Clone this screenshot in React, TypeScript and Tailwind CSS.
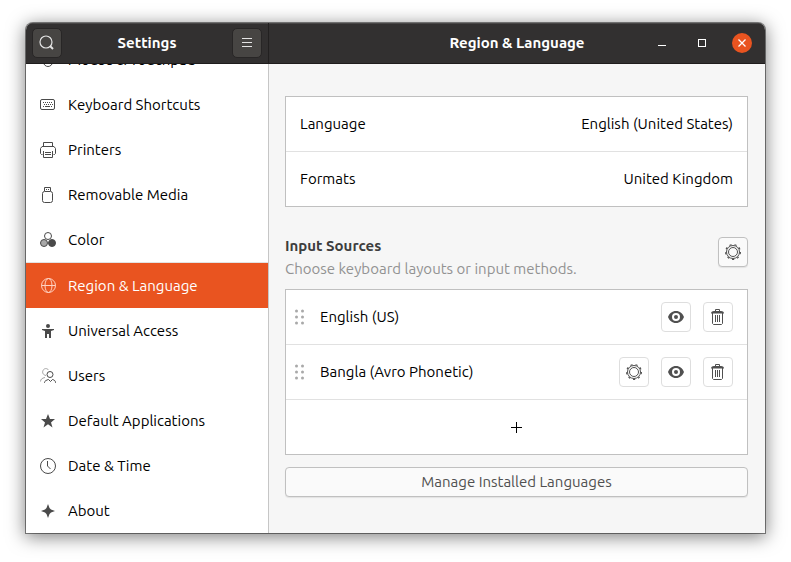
import type { ReactNode } from "react";

type IconProps = { children: ReactNode; size?: number };

function Icon({ children, size = 16 }: IconProps) {
  return (
    <svg
      width={size}
      height={size}
      viewBox={`0 0 ${size} ${size}`}
      fill="none"
      stroke="currentColor"
      className="shrink-0"
      aria-hidden="true"
    >
      {children}
    </svg>
  );
}

const MouseIcon = () => (
  <Icon>
    <rect x="3.5" y="0.5" width="9" height="14" rx="4.5" />
    <path d="M8 3v3" />
  </Icon>
);

const KeyboardIcon = () => (
  <Icon>
    <rect x="0.5" y="2.5" width="14" height="10" rx="1.5" />
    <path d="M3 5.5h10M4 7.5h9" strokeDasharray="1 1" />
    <path d="M3 9.5h1M5 9.5h5M11 9.5h1" />
  </Icon>
);

const PrinterIcon = () => (
  <Icon>
    <path d="M3.5 4.5v-4h9v4M2.5 12.5h-1l-1-1v-5l1.5-2h12l1.5 2v5l-1 1h-1" />
    <path d="M3.5 9v6.5h9V9M5 10.5h6M5 12.5h6" />
  </Icon>
);

const MediaIcon = () => (
  <Icon>
    <path d="M4.5 4V0.5h6V4M6 2.5h1M8 2.5h1" />
    <rect x="2.5" y="4.5" width="10" height="11" rx="2" />
  </Icon>
);

const ColorIcon = () => (
  <Icon>
    <circle cx="8" cy="4" r="3.5" />
    <circle cx="4" cy="11" r="3.5" fill="#a8a8a8" />
    <circle cx="12" cy="11" r="3.5" fill="currentColor" />
  </Icon>
);

const GlobeIcon = () => (
  <Icon>
    <circle cx="8.5" cy="7.5" r="7" />
    <ellipse cx="8.5" cy="7.5" rx="3.5" ry="7" />
    <path d="M1.5 7.5h14" />
  </Icon>
);

const AccessIcon = () => (
  <Icon>
    <g fill="currentColor" stroke="none">
      <circle cx="8" cy="3" r="2" />
      <path d="M2 6h12v1l-3 1v7H9v-4H7v4H5V8L2 7z" />
    </g>
  </Icon>
);

const UsersIcon = () => (
  <Icon>
    <g stroke="#a3a3a3">
      <path d="M6 7.5C3 7 2 4.500 3 2.5c1-2.300 4-2.600 5.500-.5" />
      <path d="M.5 13.5c0-2 1.500-3.500 4.500-4" />
    </g>
    <circle cx="10" cy="6.5" r="3" />
    <path d="M4.5 15v-.5c0-1.500 2-2.500 4-3l2 2 2-2c2 .5 3 1.500 3 3v.5" />
  </Icon>
);

const StarIcon = () => (
  <Icon>
    <path
      d="M8 1l2 5h5l-4 3.400L12.5 14.5 8 11.300 3.500 14.500 5 9.400 1 6h5z"
      fill="currentColor"
      stroke="none"
    />
  </Icon>
);

const ClockIcon = () => (
  <Icon>
    <circle cx="8" cy="8" r="7.5" />
    <path d="M7.5 3v5l3 3" />
  </Icon>
);

const SparkIcon = () => (
  <Icon>
    <path
      d="M8 1l1.500 4L11 6.500 15 8l-4 1.500L9.500 11 8 15l-1.500-4L5 9.500 1 8l4-1.500L6.500 5z"
      fill="currentColor"
      stroke="none"
    />
  </Icon>
);

const GearIcon = () => (
  <Icon>
    <circle cx="8" cy="8" r="4.5" />
    <circle cx="8" cy="8" r="6.5" />
    <circle cx="8" cy="8" r="7.4" strokeWidth="1.2" strokeDasharray="2.2 2.965" />
  </Icon>
);

const EyeIcon = () => (
  <Icon>
    <path
      fillRule="evenodd"
      d="M8 2c4 0 6.600 2.400 8 6-1.400 3.600-4 6-8 6s-6.600-2.400-8-6c1.400-3.600 4-6 8-6zm0 2a4 4 0 100 8 4 4 0 000-8zm0 2a2 2 0 110 4 2 2 0 010-4z"
      fill="currentColor"
      stroke="none"
    />
  </Icon>
);

const TrashIcon = () => (
  <Icon>
    <path d="M5.500 2.500v-2h4v2" />
    <path d="M1 4.500c0-1.500 1-2.500 3-2.500h7c2 0 3 1 3 2.500z" fill="currentColor" stroke="none" />
    <path d="M2.500 4v10.500l1 1h8l1-1V4M5.500 6v7M7.500 6v7M9.500 6v7" />
  </Icon>
);

const SearchIcon = () => (
  <Icon>
    <circle cx="7" cy="7" r="6" strokeWidth="1.2" />
    <path d="M11 11l3 3" strokeWidth="2" />
  </Icon>
);

const MenuIcon = () => (
  <Icon>
    <path d="M3 3.500h10M3 7.500h10M3 11.500h10" />
  </Icon>
);

const GripIcon = () => (
  <svg width="12" height="16" viewBox="0 0 12 16" fill="#a9a9a9" aria-hidden="true">
    {[2.5, 8.5].map((x) =>
      [2, 8, 14].map((y) => <circle key={`${x}-${y}`} cx={x} cy={y} r="1.5" />),
    )}
  </svg>
);

const sections = [
  { label: "Mouse & Touchpad", icon: <MouseIcon /> },
  { label: "Keyboard Shortcuts", icon: <KeyboardIcon /> },
  { label: "Printers", icon: <PrinterIcon /> },
  { label: "Removable Media", icon: <MediaIcon /> },
  { label: "Color", icon: <ColorIcon /> },
  { label: "Region & Language", icon: <GlobeIcon />, current: true },
  { label: "Universal Access", icon: <AccessIcon /> },
  { label: "Users", icon: <UsersIcon /> },
  { label: "Default Applications", icon: <StarIcon /> },
  { label: "Date & Time", icon: <ClockIcon /> },
  { label: "About", icon: <SparkIcon /> },
];

const locale = [
  { label: "Language", value: "English (United States)" },
  { label: "Formats", value: "United Kingdom" },
];

const sources = [
  { name: "English (US)", configurable: false },
  { name: "Bangla (Avro Phonetic)", configurable: true },
];

function HeaderButton({ label, children }: { label: string; children: ReactNode }) {
  return (
    <button
      aria-label={label}
      className="flex size-[30px] items-center justify-center rounded-[5px] border border-[#282626] bg-[#474543] text-[#e4e4e4]"
    >
      {children}
    </button>
  );
}

function RowButton({ label, children }: { label: string; children: ReactNode }) {
  return (
    <button
      aria-label={label}
      className="flex size-[30px] items-center justify-center rounded-[4px] border border-[#dedede] bg-white text-[#505050]"
    >
      {children}
    </button>
  );
}

export default function App() {
  return (
    <div className="min-h-screen bg-white px-[26px] pt-[23px] pb-[29px] font-['Ubuntu','Noto_Sans',sans-serif] text-[15px] leading-5 text-black">
      <div className="overflow-hidden rounded-t-[7px] bg-[#f6f6f6] shadow-[0_0_0_1px_rgba(0,0,0,0.45),0_3px_18px_1px_rgba(0,0,0,0.5)]">
        <header className="flex h-[41px] border-b border-[#1f1d1d] bg-[#323030] font-bold text-white shadow-[inset_0_1px_0_#484646]">
          <div className="flex w-[243px] shrink-0 items-center justify-between border-r border-[#222020] px-1.5">
            <HeaderButton label="Search">
              <SearchIcon />
            </HeaderButton>
            <h1>Settings</h1>
            <HeaderButton label="Menu">
              <MenuIcon />
            </HeaderButton>
          </div>
          <div className="grid flex-1 grid-cols-[1fr_auto_1fr] items-center">
            <h2 className="col-start-2">Region &amp; Language</h2>
            <div className="flex items-center justify-end gap-5 pr-[13px]">
              <button aria-label="Minimize" className="flex size-5 items-center justify-center">
                <Icon>
                  <path d="M4 10.5h8" />
                </Icon>
              </button>
              <button aria-label="Maximize" className="flex size-5 items-center justify-center">
                <Icon>
                  <rect x="4.5" y="4.5" width="7" height="7" />
                </Icon>
              </button>
              <button
                aria-label="Close"
                className="flex size-5 items-center justify-center rounded-full bg-[#e95420]"
              >
                <Icon>
                  <path d="M4.5 4.5l7 7M11.5 4.5l-7 7" strokeWidth="1.3" />
                </Icon>
              </button>
            </div>
          </div>
        </header>

        <div className="flex">
          <nav className="flex w-[243px] shrink-0 flex-col justify-end overflow-hidden border-r border-[#c6c6c6] bg-white [contain:size]">
            {sections.map(({ label, icon, current }) => (
              <button
                key={label}
                aria-current={current ? "page" : undefined}
                className={
                  current
                    ? "flex h-[46px] shrink-0 items-center gap-3 border-t border-[#e2e2e2] bg-[#e95420] px-3.5 text-left text-white"
                    : "flex h-[45px] shrink-0 items-center gap-3 px-3.5 text-left"
                }
              >
                <span className={current ? "text-[#ffd2c2]" : "text-[#4a4a4a]"}>{icon}</span>
                {label}
              </button>
            ))}
          </nav>

          <main className="min-w-0 flex-1 pt-8 pr-[17px] pb-9 pl-4">
            <div className="divide-y divide-[#e1e1e1] border border-[#c0c0c0] bg-white">
              {locale.map(({ label, value }) => (
                <div key={label}>
                  <button className="flex h-[54px] w-full items-center justify-between px-3.5">
                    <span>{label}</span>
                    <span>{value}</span>
                  </button>
                </div>
              ))}
            </div>

            <div className="mt-[30px] flex items-start justify-between">
              <div className="flex flex-col gap-0.5">
                <h3 className="leading-[18px] font-bold text-[#3d3d3d]">Input Sources</h3>
                <p className="leading-6 text-[#929292]">
                  Choose keyboard layouts or input methods.
                </p>
              </div>
              <button
                aria-label="Input source options"
                className="flex size-[30px] items-center justify-center rounded-[4px] border border-[#c0c0c0] bg-[#fafafa] text-[#505050] shadow-[0_1px_1px_rgba(0,0,0,0.08)]"
              >
                <GearIcon />
              </button>
            </div>

            <ul className="mt-2 divide-y divide-[#e1e1e1] border border-[#c0c0c0] bg-white">
              {sources.map(({ name, configurable }) => (
                <li key={name} className="box-content flex h-[54px] items-center gap-3 pr-3.5 pl-2">
                  <span className="w-3.5 cursor-grab">
                    <GripIcon />
                  </span>
                  <span className="flex-1">{name}</span>
                  {configurable && (
                    <RowButton label={`Options for ${name}`}>
                      <GearIcon />
                    </RowButton>
                  )}
                  <RowButton label={`Preview ${name}`}>
                    <EyeIcon />
                  </RowButton>
                  <RowButton label={`Remove ${name}`}>
                    <TrashIcon />
                  </RowButton>
                </li>
              ))}
              <li>
                <button
                  aria-label="Add input source"
                  className="flex h-[54px] w-full items-center justify-center"
                >
                  <Icon size={11}>
                    <path d="M0 5.5h11M5.5 0v11" />
                  </Icon>
                </button>
              </li>
            </ul>

            <button className="mt-3 flex h-[30px] w-full items-center justify-center rounded-[4px] border border-[#c0c0c0] bg-[#fafafa] text-[#505050] shadow-[0_1px_1px_rgba(0,0,0,0.08)]">
              Manage Installed Languages
            </button>
          </main>
        </div>
      </div>
    </div>
  );
}
